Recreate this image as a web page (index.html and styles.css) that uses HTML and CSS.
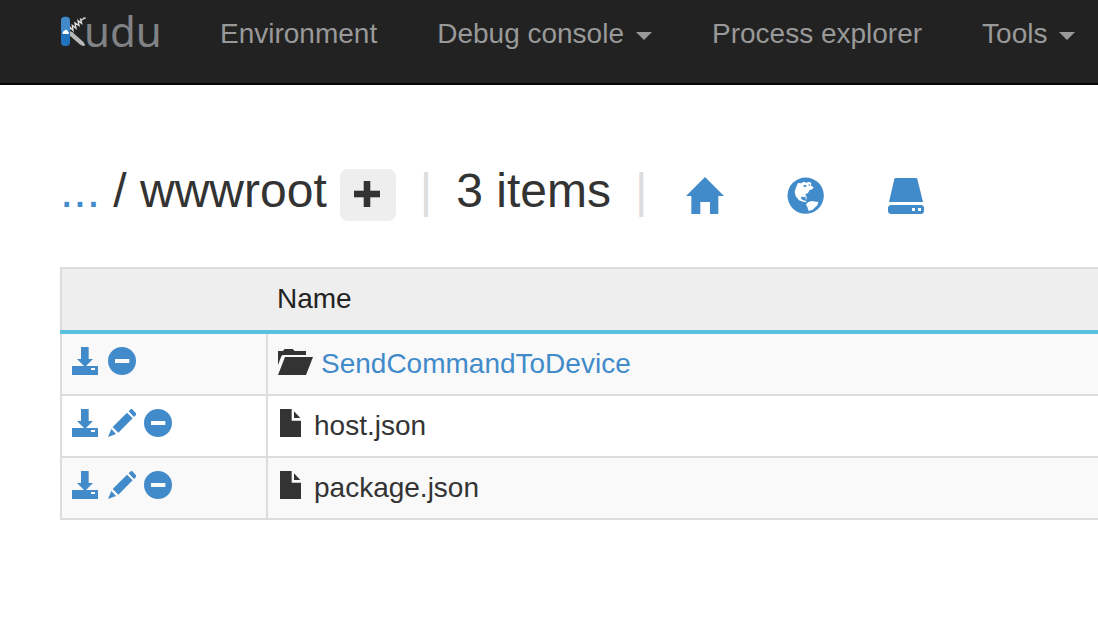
FILE: index.html
```html
<!DOCTYPE html>
<html lang="en">
<head>
<meta charset="utf-8">
<title>Kudu</title>
<link rel="stylesheet" href="styles.css">
</head>
<body>
<svg class="defs" aria-hidden="true">
  <symbol id="download" viewBox="0 0 84 84">
    <path d="M27 0H50V36H63L39 60L15 36H27ZM0 57H36L39 60L42 57H78V84H0ZM57 63V69H69V63Z" fill-rule="evenodd"/>
  </symbol>
  <symbol id="minus" viewBox="0 0 84 84">
    <path d="M42 0a42 42 0 1 0 0 84a42 42 0 1 0 0-84ZM21 36H64V48H21Z" fill-rule="evenodd"/>
  </symbol>
  <symbol id="pencil" viewBox="0 0 84 84">
    <path d="M68 1Q70 -1 73 1L84 13Q86 16 84 18L78 24L62 7ZM57 11L74 28L31 71L14 54ZM10 60L24 75L0 84Z"/>
  </symbol>
  <symbol id="file" viewBox="0 0 84 84">
    <path d="M6 0H41V35H69V84H6ZM48 7L67 27H48Z"/>
  </symbol>
  <symbol id="folder" viewBox="0 0 105 84">
    <path d="M0 12H15L20 6H44L50 12H84V24H16Q12 24 10 28L0 54ZM21 30H105L84 84H0Z"/>
  </symbol>
</svg>

<nav class="navbar">
  <a class="brand" href="#" aria-label="Kudu">
    <svg class="brand-mark" viewBox="30 45 81 96" aria-hidden="true">
      <path d="M59 94L66 95L101 127Q106 133 104 138Q96 139 88 132L58 106Z" fill="#b8b8b8"/>
      <path d="M62 88L61 82L69 91L67 76L78 85L75 69L87 77L84 62L95 70L92 58Q98 62 100 55L107 54" fill="none" stroke="#ddd" stroke-width="4"/>
      <rect x="33" y="50" width="27" height="88" rx="12" fill="#2173bd"/>
      <path d="M33 94V63Q33 50 46 50Q60 50 60 63V94Z" fill="#4189c8"/>
      <path d="M40 102Q35 100 38 96Q40 92 43 93Q45 87 50 90Q53 92 53 94Q59 96 56 102Z" fill="#fff"/>
    </svg>
    <span class="brand-text">udu</span>
  </a>
  <a class="nav-link" href="#">Environment</a>
  <a class="nav-link" href="#">Debug console<span class="caret"></span></a>
  <a class="nav-link" href="#">Process explorer</a>
  <a class="nav-link" href="#">Tools<span class="caret"></span></a>
</nav>

<main class="content">
  <header class="path-bar">
    <h1 class="crumbs"><a href="#">...</a> / wwwroot</h1>
    <button class="add" type="button" aria-label="Add">
      <svg viewBox="0 0 26 26" aria-hidden="true"><path d="M10 0H16V10H26V16H16V26H10V16H0V10H10Z" stroke="currentColor" stroke-width=".6"/></svg>
    </button>
    <span class="bar">|</span>
    <span class="count">3 items</span>
    <span class="bar">|</span>
    <div class="shortcuts">
      <a href="#" aria-label="Home">
        <svg viewBox="50 36 114 114"><path d="M107 36L164 93H147V147H122V111H93V147H66V93H50Z"/></svg>
      </a>
      <a href="#" aria-label="Site root">
        <svg viewBox="351 36 114 114">
          <circle cx="407" cy="92" r="54.5"/>
          <path fill="#fff" d="M380 63L384 54L394 55L401 50L409 53L417 50L424 54L423 62L431 67L427 73L419 75L414 84L406 88L410 95L410 105L403 96L394 95L393 101L400 106L407 107L411 112L399 110L387 106L377 94L374 80L377 70Z"/>
          <path fill="#fff" d="M408 118L415 111L425 108L445 111L442 121L434 128L428 134L416 138L412 126Z"/>
          <path d="M399 61L407 60L411 64L403 67ZM414 59L420 58L419 64ZM404 97L408 94L409 99Z"/>
        </svg>
      </a>
      <a href="#" aria-label="Local disk">
        <svg viewBox="57 36 114 114"><path fill-rule="evenodd" d="M80 39H141Q144 39 145 42L162 111H60L76 42Q77 39 80 39ZM63 120H159L165 126V141L159 147H63L57 141V126ZM129 129V138H138V129ZM147 129V138H156V129Z"/></svg>
      </a>
    </div>
  </header>

  <table class="files">
    <thead>
      <tr><th class="actions-col"></th><th>Name</th></tr>
    </thead>
    <tbody>
      <tr>
        <td><div class="cell">
          <a href="#" aria-label="Download"><svg class="icon"><use href="#download"/></svg></a>
          <a href="#" aria-label="Delete"><svg class="icon"><use href="#minus"/></svg></a>
        </div></td>
        <td><div class="cell"><svg class="icon icon-folder"><use href="#folder"/></svg><a href="#">SendCommandToDevice</a></div></td>
      </tr>
      <tr>
        <td><div class="cell">
          <a href="#" aria-label="Download"><svg class="icon"><use href="#download"/></svg></a>
          <a href="#" aria-label="Edit"><svg class="icon"><use href="#pencil"/></svg></a>
          <a href="#" aria-label="Delete"><svg class="icon"><use href="#minus"/></svg></a>
        </div></td>
        <td><div class="cell"><svg class="icon"><use href="#file"/></svg><span>host.json</span></div></td>
      </tr>
      <tr>
        <td><div class="cell">
          <a href="#" aria-label="Download"><svg class="icon"><use href="#download"/></svg></a>
          <a href="#" aria-label="Edit"><svg class="icon"><use href="#pencil"/></svg></a>
          <a href="#" aria-label="Delete"><svg class="icon"><use href="#minus"/></svg></a>
        </div></td>
        <td><div class="cell"><svg class="icon"><use href="#file"/></svg><span>package.json</span></div></td>
      </tr>
    </tbody>
  </table>
</main>
</body>
</html>
```
FILE: styles.css
```css
* { box-sizing: border-box; }

body {
  margin: 0;
  background: #fff;
  color: #333;
  font: 28px/40px "Liberation Sans", Arial, sans-serif;
}

a { color: #428bca; text-decoration: none; }

svg { display: block; fill: currentColor; }

.defs { display: none; }

.navbar {
  display: flex;
  padding: 12px 0 29px 60px;
  background: #222;
  border-bottom: 2px solid #080808;
  white-space: nowrap;
}

.brand {
  display: flex;
  flex: none;
  width: 130px;
  color: #808285;
}

.brand-mark { flex: none; width: 27px; height: 32px; margin-top: 3px; }

.brand-text { font: 42px/38px "Noto Sans", sans-serif; margin-left: -3px; }

.nav-link {
  display: flex;
  flex: none;
  align-items: center;
  padding: 2px 30px 0;
  color: #999;
}

.nav-link:last-child { padding-right: 0; }

.caret {
  margin: 4px 0 0 12px;
  border: 8px solid transparent;
  border-top-color: #999;
  border-bottom: 0;
}

.content { padding: 80px 0 80px 60px; }

.path-bar {
  display: flex;
  align-items: center;
  height: 60px;
  margin-bottom: 42px;
  font-size: 48px;
  line-height: 52px;
  white-space: nowrap;
}

.crumbs { margin: 0; font-size: 48px; font-weight: 400; }

.crumbs, .count, .bar { padding-bottom: 8px; }

.add {
  display: grid;
  place-items: center;
  width: 56px;
  height: 52px;
  margin-left: 13px;
  padding: 0 2px 2px 0;
  border: 0;
  border-radius: 8px;
  background: #eee;
  color: #333;
}

.add svg { width: 26px; height: 26px; }

.bar { margin: 0 24px; color: #ddd; }

.shortcuts { display: flex; gap: 63px; margin-left: 15px; padding-top: 2px; }

.shortcuts svg { width: 38px; height: 38px; }

.files {
  width: 100%;
  border-collapse: collapse;
}

.files th {
  padding: 10px 10px 11px;
  border-top: 2px solid #ddd;
  border-bottom: 4px solid #5bc0de;
  background: #eee;
  color: #222;
  font-weight: 400;
  text-align: left;
}

.files .actions-col { width: 206px; border-left: 2px solid #ddd; }

.files td {
  padding: 10px;
  border-bottom: 2px solid #ddd;
  border-left: 2px solid #ddd;
}

.files tbody tr:nth-child(odd) { background: #f9f9f9; }

.cell { display: flex; gap: 8px; height: 40px; }

.icon { width: 28px; height: 28px; margin-top: 3px; }

.icon-folder { width: 35px; }
```
